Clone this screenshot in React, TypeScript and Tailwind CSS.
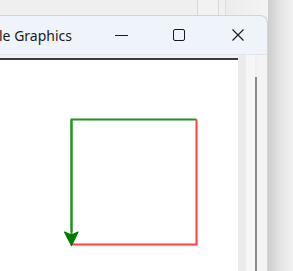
export default function App() {
  return (
    <div className="flex h-[271px] w-[293px] overflow-hidden bg-[#f0f0f0] font-['Noto_Sans',sans-serif]">
      {/* left: background strip + window */}
      <div className="flex w-[268px] shrink-0 flex-col">
        <div className="flex h-[15px] shrink-0 bg-[#efefef]">
          <div className="w-[197px] shrink-0" />
          <div className="w-[21px] shrink-0 border-l border-[#d6d6d6] bg-[#f2f2f2]" />
          <div className="w-[7px] shrink-0 border-l border-[#dadada] bg-[#f0f0f0]" />
          <div className="flex-1 border-l border-[#dedede] bg-gradient-to-r from-[#ececec] to-[#f4f4f4]" />
        </div>

        <div className="flex flex-1 flex-col overflow-hidden rounded-tr-[8px] border-r border-t border-[#d4d4d4] bg-[#eff3fa]">
          {/* title bar */}
          <div className="flex h-[38px] shrink-0 items-center">
            <div className="flex w-[72px] shrink-0 justify-end overflow-hidden whitespace-nowrap text-[14px] text-[#1a1a1a]">
              Python Turtle Graphics
            </div>
            <div className="ml-[43px] h-px w-[13px] bg-[#1a1a1a]" />
            <div className="ml-[45px] h-[12px] w-[12px] rounded-[2px] border border-[#1a1a1a]" />
            <svg className="ml-[47px]" width="12" height="12" viewBox="0 0 12 12">
              <path d="M0.5 0.5L11.5 11.5M11.5 0.5L0.5 11.5" stroke="#1a1a1a" strokeWidth="1.1" />
            </svg>
          </div>

          {/* client area */}
          <div className="flex flex-1 flex-col border-t border-[#e2e6ec] bg-[#f0f0f0]">
            <div className="flex flex-1">
              <div className="flex w-[238px] shrink-0 flex-col pt-[3px]">
                <div className="flex flex-1 flex-col border-t-2 border-[#3c3c3c] bg-white">
                  <svg width="238" height="212" viewBox="0 0 238 212" className="block">
                    <path d="M71.5 184.5V59.5H196.5" fill="none" stroke="#1f961f" strokeWidth="2" />
                    <path d="M196.5 59.5V184.5H71.5" fill="none" stroke="#ff4040" strokeWidth="2" />
                    <path d="M71.5 59.5V172" fill="none" stroke="#1f961f" strokeWidth="2" />
                    <polygon points="71.5,185.5 64.5,172 71.5,175 78,172" fill="#007a00" stroke="#007a00" strokeWidth="1.2" strokeLinejoin="round" />
                  </svg>
                </div>
              </div>
              <div className="flex flex-1">
                <div className="w-[8px] shrink-0 bg-[#ebebeb]" />
                <div className="flex w-[9px] shrink-0 bg-[#f6f6f6]" />
                <div className="flex w-[2px] shrink-0 flex-col pt-[22px]">
                  <div className="flex-1 bg-[#8a8a8a]" />
                </div>
                <div className="flex-1 bg-[#f3f3f3]" />
              </div>
            </div>
          </div>
        </div>
      </div>

      {/* right: shadow */}
      <div className="flex-1 bg-gradient-to-r from-[#cdcdcd] via-[#e4e4e4] to-[#f2f2f2]" />
    </div>
  );
}
